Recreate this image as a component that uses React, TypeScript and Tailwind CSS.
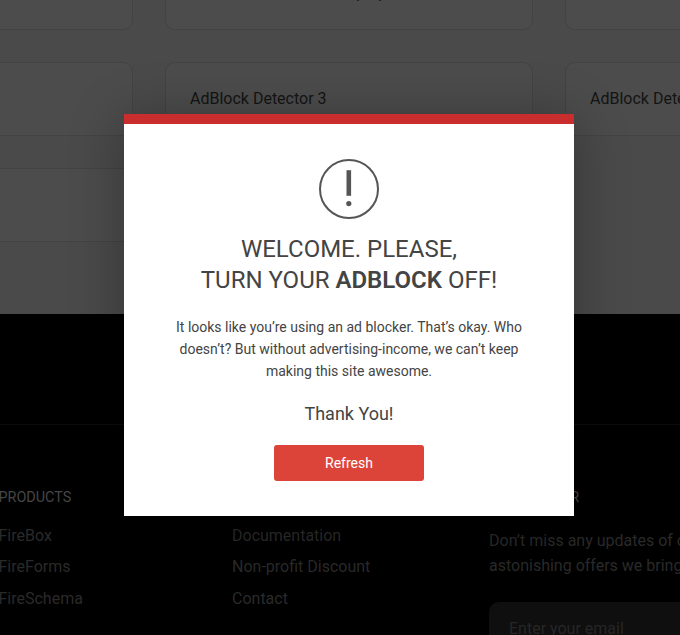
import React from 'react';

function Card({ children, className = '' }: { children?: React.ReactNode; className?: string }) {
  return (
    <div className={`flex h-[74px] items-center rounded-[10px] border border-[#434343] bg-[#4c4c4c] px-6 text-base text-[#141414] ${className}`}>
      {children}
    </div>
  );
}

function LinkColumn({ title, links, className }: { title: string; links: string[]; className: string }) {
  return (
    <div className={className}>
      <h3 className="mb-[9.6px] text-[14.4px] leading-6 text-[#464646]">{title}</h3>
      <ul className="text-base leading-[31.5px]">
        {links.map((link) => (
          <li key={link}>{link}</li>
        ))}
      </ul>
    </div>
  );
}

export default function App() {
  return (
    <div className="relative h-[635px] w-[680px] overflow-hidden bg-black font-['Roboto',sans-serif] antialiased">
      <main className="h-[314px] overflow-hidden bg-[#4a4a4a]">
        <div className="-mt-11 -ml-[235px] grid w-[1168px] grid-cols-3 gap-8">
          <Card />
          <Card>Sale Announcement Pop-up</Card>
          <Card />
          <Card />
          <Card>AdBlock Detector 3</Card>
          <Card>AdBlock Detector 4</Card>
          <Card />
        </div>
      </main>

      <footer className="text-[#2a2a2a]">
        <div className="h-[111px] border-b border-[#0c0c0c]" />
        <div className="flex w-[900px] pt-[61px]">
          <LinkColumn title="PRODUCTS" links={['FireBox', 'FireForms', 'FireSchema']} className="-ml-[1.5px] w-[233.5px]" />
          <LinkColumn title="SUPPORT" links={['Documentation', 'Non-profit Discount', 'Contact']} className="w-[257px]" />
          <div className="w-[380px]">
            <h3 className="mb-[18px] text-[14.4px] leading-6 text-[#464646]">NEWSLETTER</h3>
            <p className="text-base leading-[25px]">
              Don’t miss any updates of our products and
              <br />
              astonishing offers we bring for you.
            </p>
            <div className="mt-6 h-[54px] rounded-[10px] bg-[#0f0f0f] px-5 text-base leading-[54px] text-[#262626]">
              Enter your email
            </div>
          </div>
        </div>
      </footer>

      <div className="absolute top-[114px] left-[124px] flex h-[402px] w-[450px] flex-col items-center border-t-10 border-[#c92d2d] bg-white pt-[35px] text-center text-[#444444] shadow-[0_5px_50px_rgba(0,0,0,0.3)]">
        <svg className="size-[60px] shrink-0" viewBox="0 0 60 60" fill="none">
          <circle cx="30" cy="30" r="29" stroke="#555555" strokeWidth="2" />
          <path d="M27.5 11.2h4.6v25.6h-4.6z" fill="#555555" />
          <circle cx="29.8" cy="44.6" r="2.6" fill="#555555" />
        </svg>
        <h2 className="mt-[15px] text-2xl leading-[31px]">
          WELCOME. PLEASE,
          <br />
          TURN YOUR <strong className="font-semibold">ADBLOCK</strong> OFF!
        </h2>
        <p className="mt-5 w-[370px] text-sm leading-[22px]">
          It looks like you’re using an ad blocker. That’s okay. Who
          <br />
          doesn’t? But without advertising-income, we can’t keep
          <br />
          making this site awesome.
        </p>
        <p className="mt-[18px] text-lg leading-[27px]">Thank You!</p>
        <button className="mt-[18px] h-9 w-[150px] rounded-[3px] bg-[#dd4439] text-sm text-white">Refresh</button>
      </div>
    </div>
  );
}
